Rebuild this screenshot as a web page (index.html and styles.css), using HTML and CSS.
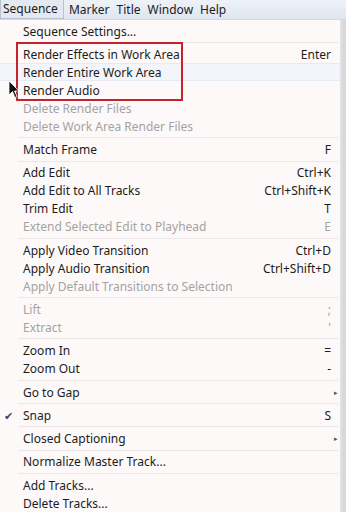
FILE: index.html
```html
<!DOCTYPE html>
<html lang="en">
<head>
    <meta charset="UTF-8">
    <title>Sequence menu</title>
    <link rel="stylesheet" href="styles.css">
</head>
<body>
    <div class="menubar">
        <span class="top active">Sequence</span>
        <span class="top">Marker</span>
        <span class="top">Title</span>
        <span class="top">Window</span>
        <span class="top">Help</span>
    </div>

    <div class="menu">
        <div class="item"><span>Sequence Settings...</span></div>
        <div class="sep"></div>
        <div class="item"><span>Render Effects in Work Area</span><span class="key">Enter</span></div>
        <div class="item hover"><span>Render Entire Work Area</span></div>
        <div class="item"><span>Render Audio</span></div>
        <div class="item off"><span>Delete Render Files</span></div>
        <div class="item off"><span>Delete Work Area Render Files</span></div>
        <div class="sep"></div>
        <div class="item"><span>Match Frame</span><span class="key">F</span></div>
        <div class="sep"></div>
        <div class="item"><span>Add Edit</span><span class="key">Ctrl+K</span></div>
        <div class="item"><span>Add Edit to All Tracks</span><span class="key">Ctrl+Shift+K</span></div>
        <div class="item"><span>Trim Edit</span><span class="key">T</span></div>
        <div class="item off"><span>Extend Selected Edit to Playhead</span><span class="key">E</span></div>
        <div class="sep"></div>
        <div class="item"><span>Apply Video Transition</span><span class="key">Ctrl+D</span></div>
        <div class="item"><span>Apply Audio Transition</span><span class="key">Ctrl+Shift+D</span></div>
        <div class="item off"><span>Apply Default Transitions to Selection</span></div>
        <div class="sep"></div>
        <div class="item off"><span>Lift</span><span class="key">;</span></div>
        <div class="item off"><span>Extract</span><span class="key">'</span></div>
        <div class="sep"></div>
        <div class="item"><span>Zoom In</span><span class="key">=</span></div>
        <div class="item"><span>Zoom Out</span><span class="key">-</span></div>
        <div class="sep"></div>
        <div class="item"><span>Go to Gap</span><span class="arrow">&#9656;</span></div>
        <div class="sep"></div>
        <div class="item"><span class="check">&#10004;</span><span>Snap</span><span class="key">S</span></div>
        <div class="sep"></div>
        <div class="item"><span>Closed Captioning</span><span class="arrow">&#9656;</span></div>
        <div class="sep"></div>
        <div class="item"><span>Normalize Master Track...</span></div>
        <div class="sep"></div>
        <div class="item"><span>Add Tracks...</span></div>
        <div class="item"><span>Delete Tracks...</span></div>

        <div class="redbox"></div>
        <svg class="cursor" width="12" height="20" viewBox="0 0 12 20">
            <path d="M1 1 L1 15 L4.5 11.5 L7 17.5 L9 16.5 L6.5 11 L11 11 Z" fill="#111" stroke="#fff" stroke-width="0.8"/>
        </svg>
    </div>
</body>
</html>
```

FILE: styles.css
```css
body {
    margin: 0;
    width: 346px;
    height: 512px;
    overflow: hidden;
    background: #d9d9dc;
    font-family: "Noto Sans", "Open Sans", sans-serif;
    font-size: 12px;
    color: #1c1c1c;
}

.menubar {
    display: flex;
    height: 19px;
    align-items: center;
    background: linear-gradient(#eef2f8, #dfe6f0);
    border-bottom: 1px solid #d2d9e4;
    font-size: 12px;
}

.top {
    padding: 0 3px 0 4px;
    line-height: 18px;
}

.active {
    background: #e4e9f1;
    border: 1px solid #b9c2d0;
    border-top: none;
    padding: 0 5px 0 2px;
    margin-right: 1px;
}

.menu {
    position: relative;
    width: 340px;
    background: #fdf9f9;
    border-right: 2px solid #e4e1e3;
    padding-top: 2px;
    height: 493px;
}

.item {
    display: flex;
    align-items: center;
    height: 18px;
    padding: 0 9px 0 23px;
    position: relative;
}

.item .key {
    margin-left: auto;
}

.item .arrow {
    margin-left: auto;
    font-size: 7px;
    color: #555;
    margin-right: -7px;
}

.item .check {
    position: absolute;
    left: 4px;
    color: #3b4a66;
    font-size: 11px;
}

.hover {
    background: #f3f5fa;
    box-shadow: inset 0 1px 0 #e6ebf3, inset 0 -1px 0 #e6ebf3;
}

.off {
    color: #a3a3a3;
}

.sep {
    height: 1px;
    margin: 2px 2px 2.3px 18px;
    background: #ebe6e7;
}

.redbox {
    position: absolute;
    left: 16px;
    top: 22px;
    width: 163px;
    height: 55px;
    border: 2px solid #c8202c;
}

.cursor {
    position: absolute;
    left: 8px;
    top: 60px;
}
```
